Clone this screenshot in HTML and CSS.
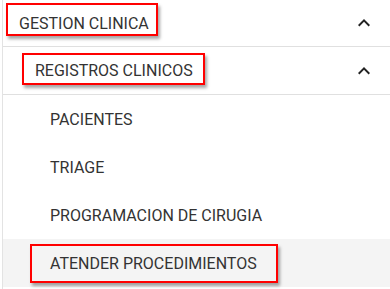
FILE: index.html
```html
<!DOCTYPE html>
<html lang="es">
<head>
    <meta name="viewport" content="width=device-width, initial-scale=1">
    <link rel="stylesheet" href="styles.css">
    <title>Menu</title>
</head>
<body>
<div class="menu">
    <div class="menuRow level1">
        <span class="menuText">GESTION CLINICA</span>
        <svg class="chevron" viewBox="0 0 24 24"><path d="M12 8l-6 6 1.41 1.41L12 10.83l4.59 4.58L18 14z"/></svg>
    </div>
    <div class="menuRow level2">
        <span class="menuText">REGISTROS CLINICOS</span>
        <svg class="chevron" viewBox="0 0 24 24"><path d="M12 8l-6 6 1.41 1.41L12 10.83l4.59 4.58L18 14z"/></svg>
    </div>
    <div class="menuItem">PACIENTES</div>
    <div class="menuItem">TRIAGE</div>
    <div class="menuItem">PROGRAMACION DE CIRUGIA</div>
    <div class="menuItem active">ATENDER PROCEDIMIENTOS</div>

    <!-- annotation boxes -->
    <div class="mark markOne"></div>
    <div class="mark markTwo"></div>
    <div class="mark markThree"></div>
</div>
</body>
</html>
```

FILE: styles.css
```css
body {
    margin: 0;
    font-family: Roboto, "Noto Sans", sans-serif;
    background: #fff;
}

.menu {
    position: relative;
    margin-left: 2px;
    border-left: 1px solid #e3e3e3;
    height: 289px;
    overflow: hidden;
    color: #333;
    font-size: 16px;
}

.menuRow {
    display: flex;
    align-items: center;
    justify-content: space-between;
    height: 47px;
    border-bottom: 1px solid #e0e0e0;
    padding-right: 14px;
}
.level1 {
    height: 46px;
    padding-left: 16px;
}
.level2 {
    padding-left: 32px;
}

.chevron {
    width: 24px;
    height: 24px;
    fill: #222;
}

.menuItem {
    display: flex;
    align-items: center;
    height: 48px;
    padding-left: 47px;
}
.menuItem.active {
    background: #f4f4f4;
}

.mark {
    position: absolute;
    border: 2px solid #f00;
    box-shadow: 2px 3px 3px rgba(0, 0, 0, 0.35);
}
.markOne {
    left: 3px;
    top: 3px;
    width: 148px;
    height: 29px;
}
.markTwo {
    left: 19px;
    top: 53px;
    width: 179px;
    height: 28px;
}
.markThree {
    left: 27px;
    top: 244px;
    width: 244px;
    height: 35px;
}
```
